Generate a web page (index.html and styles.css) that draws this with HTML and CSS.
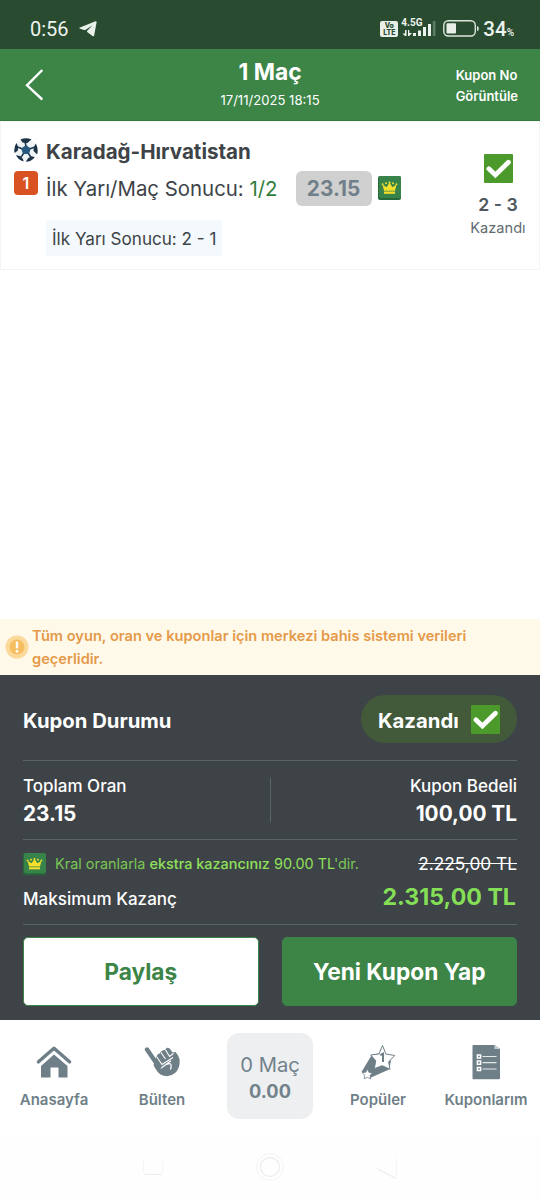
FILE: index.html
```html
<!DOCTYPE html>
<html lang="tr">
<head>
<meta charset="utf-8">
<title>Kupon</title>
<link rel="stylesheet" href="styles.css">
</head>
<body>
<svg width="0" height="0" class="defs">
  <symbol id="check" viewBox="0 0 28 28">
    <rect width="28" height="28" rx="1" fill="#4b9a2b"/>
    <path d="M4.700 14.300 11 20.300 23.600 8" fill="none" stroke="#fff" stroke-width="4.600" stroke-linecap="round"/>
  </symbol>
  <symbol id="crown" viewBox="0 0 24 24">
    <rect width="24" height="24" rx="2" fill="#25673a"/>
    <rect width="23" height="22" x="1" rx="2" fill="#37834a"/>
    <path d="M6.300 14.700 4.700 8.500 9 11.200 12 6.600l3 4.600 4.300-2.700-1.600 6.200z" fill="#f5df2d"/>
    <path d="M6.300 15.500h11.400v2.300H6.300z" fill="#f5df2d"/>
    <circle cx="4.800" cy="8.200" r="1" fill="#f5df2d"/><circle cx="8.400" cy="7.300" r="1" fill="#f5df2d"/><circle cx="12" cy="6.500" r="1.100" fill="#f5df2d"/><circle cx="15.600" cy="7.300" r="1" fill="#f5df2d"/><circle cx="19.200" cy="8.200" r="1" fill="#f5df2d"/>
  </symbol>
</svg>

<div class="status">
  <span class="clock">0:56</span>
  <svg class="plane" width="18" height="16" viewBox="0 0 18 16"><path d="M.5 7.500Q0 6.800 1 6.500L16.500.2Q17.800-.1 17.600 1.200L15.200 14.200Q14.900 15.700 13.500 14.900L8.500 11.300Q7.500 10.400 8.500 9.400L13.600 4.200 6.300 8.900Q5.700 9.200 5 9z" fill="#e9f1ea"/></svg>
  <div class="status-right">
    <div class="volte"><span>Vo</span><span>LTE</span></div>
    <div class="signal">
      <span>4.5G</span>
      <svg width="35" height="17" viewBox="0 0 35 17"><g fill="#edf3ee"><path d="M4 10h1.500v6H4L1.500 13.500H4zM7 10h1.300v3H11L8.300 16H7z"/><rect x="12" y="13" width="3" height="3"/><rect x="17" y="10.500" width="3" height="5.500"/><rect x="22" y="7" width="3" height="9"/><rect x="27" y="4" width="3" height="12"/></g><rect x="31.800" y="1" width="2.700" height="15" fill="#5b7b62"/></svg>
    </div>
    <svg class="battery" width="37" height="17" viewBox="0 0 37 17"><rect x=".8" y=".8" width="31.500" height="15.200" rx="4.500" fill="none" stroke="#dce6dd" stroke-width="1.400"/><rect x="3.500" y="3.300" width="9.500" height="10.300" rx="1" fill="#e8efe9"/><path d="M34 6q1.800 0 1.800 2.500T34 11z" fill="#dce6dd"/></svg>
    <span class="pct">34<small>%</small></span>
  </div>
</div>

<header class="topbar">
  <svg class="back" width="20" height="34" viewBox="0 0 20 34"><path d="M17.300 2 2 17.300 17.300 31.500" fill="none" stroke="#fff" stroke-width="2.400"/></svg>
  <div class="titles"><h1>1 Maç</h1><time>17/11/2025 18:15</time></div>
  <a class="couponno">Kupon No<br>Görüntüle</a>
</header>

<section class="match">
  <div class="marks">
    <svg width="24" height="24" viewBox="0 0 24 24"><circle cx="12" cy="12" r="11" fill="#eef3f6"/><path d="M12 7 16.800 10.500 15 16H9L7.200 10.500z" fill="#285980"/><path d="M6.500 1.600Q12-1 17.500 1.600L13 5.200 8.500 4.500zM21.800 5.500Q24.800 11 23 16.500L19.500 12.700 19.800 9.300zM20.800 19.300Q17 23.800 11.800 23.800L14.300 20 17.800 18.300zM9.700 23.500Q4.300 22 2 17.300L6.200 18.100 8.800 20.800zM.5 15Q-.5 9 2.500 5L4.300 9.300 3.700 12.700z" fill="#1c3247"/><path d="M12 8 11 4M16 10.700l4.500-1.500M14.500 15.500l2.500 4M9.500 15.500 7 19.300M8 10.700 3.500 9" stroke="#1c3850" stroke-width="1.500"/></svg>
    <span class="mbs">1</span>
  </div>
  <div class="info">
    <h2>Karadağ-Hırvatistan</h2>
    <div class="pick"><span class="market">İlk Yarı/Maç Sonucu: <em>1/2</em></span><span class="odd">23.15</span><svg width="23" height="24" viewBox="0 0 24 24" preserveAspectRatio="none"><use href="#crown"/></svg></div>
    <span class="half">İlk Yarı Sonucu: 2 - 1</span>
  </div>
  <div class="result"><svg width="29" height="29"><use href="#check"/></svg><b>2 - 3</b><span>Kazandı</span></div>
</section>

<main class="space"></main>

<aside class="notice">
  <svg width="24" height="24" viewBox="0 0 24 24"><circle cx="12" cy="12" r="11.500" fill="#fad99b"/><circle cx="12" cy="12" r="7.500" fill="#f7bd61"/><path d="M12 6.500v7" stroke="#fff" stroke-width="2.400"/><circle cx="12" cy="16.300" r="1.400" fill="#fff"/></svg>
  <p>Tüm oyun, oran ve kuponlar için merkezi bahis sistemi verileri geçerlidir.</p>
</aside>

<section class="summary">
  <div class="state"><h3>Kupon Durumu</h3><span class="pill"><span>Kazandı</span><svg width="29" height="29"><use href="#check"/></svg></span></div>
  <div class="totals">
    <div><span>Toplam Oran</span><b>23.15</b></div>
    <i></i>
    <div class="right"><span>Kupon Bedeli</span><b>100,00 TL</b></div>
  </div>
  <div class="gain">
    <div class="king"><svg width="23" height="22" viewBox="0 0 24 24" preserveAspectRatio="none"><use href="#crown"/></svg><p>Kral oranlarla <strong>ekstra kazancınız</strong> <span>90.00 TL</span>'dir.</p><s>2.225,00 TL</s></div>
    <div class="max"><span>Maksimum Kazanç</span><b>2.315,00 TL</b></div>
  </div>
  <div class="actions"><button class="share">Paylaş</button><button class="new">Yeni Kupon Yap</button></div>
</section>

<nav class="tabs">
  <a><svg width="36" height="36" viewBox="0 0 36 36"><path d="M18 10.500 31.500 22V33.500H22.500V23.500H14.500V33.500H5V22z" fill="#6f7f88"/><path d="M2.500 17.800 18 4.300 33.500 17.800" fill="none" stroke="#6f7f88" stroke-width="3.500" stroke-linecap="round" stroke-linejoin="round"/></svg><span>Anasayfa</span></a>
  <a><svg width="36" height="36" viewBox="0 0 36 36"><g fill="#6f7f88"><path d="M12.500 12.500Q13.500 9.500 16 9.300L17 7.500Q19 5.500 21 6L22.500 4Q25 3 26.500 5.500L28.500 8.500 31.500 8Q34.500 11 35.500 15 36.500 24 31 29 24.500 34.500 16.500 30.500 12.500 27.500 9.500 21z"/></g><path d="M12.500 12.500 18 20.500 29 13.500M17 8.500 21.500 15M21.500 5.700 25.500 12.500 29.500 9.500" fill="none" stroke="#fff" stroke-width="1.100"/><path d="M16.500 24.500 27 16.800M22.500 20.500Q29 17.500 26.500 25.500" fill="none" stroke="#fff" stroke-width="1.200"/><path d="M3 5.500 15 23" stroke="#6f7f88" stroke-width="4.400" stroke-linecap="round"/></svg><span>Bülten</span></a>
  <div class="cart"><span>0 Maç</span><b>0.00</b></div>
  <a><svg width="36" height="36" viewBox="0 0 36 36"><path d="M12 10.500 1.500 28 10 34 29 25.500 31 17 22 9z" fill="#6f7f88"/><path d="M22.500 1.500 25.900 10 34.700 11.500 28.700 17.800 30 25.300 22.200 21.700 14.300 24.700 15.700 16.700 10.700 11 19 9.900z" fill="#fff" stroke="#6f7f88" stroke-width="1"/><path d="M20.300 11.200 23 9.700V18" fill="none" stroke="#6f7f88" stroke-width="2"/><path d="M7.600 25 8.900 28.300 12.400 29.200 10 31.400 10.600 34.900 7.300 33.400 4.200 34.700 4.600 31.200 2.300 28.600 5.800 28.200z" fill="#fff" stroke="#6f7f88" stroke-width=".8"/></svg><span>Popüler</span></a>
  <a><svg width="36" height="36" viewBox="0 0 36 36"><path d="M5.500 1H26.500L32 5V34.200Q32 35.200 31 35.200H5.500Q4.500 35.200 4.500 34.200V2Q4.500 1 5.500 1z" fill="#6f7f88"/><path d="M26.500 1 32 5H26.500z" fill="#c8cfd2"/><path d="M14.500 12.500h14M14.500 18.700h14M14.500 25h14" stroke="#e4e8e9" stroke-width="1.200"/><path d="M9.400 10.900h3.200v3.200H9.400zM9.400 17.100h3.200v3.200H9.400zM9.400 23.400h3.200v3.200H9.400z" fill="none" stroke="#fff" stroke-width="1.500"/></svg><span>Kuponlarım</span></a>
</nav>

<footer class="system">
  <svg width="26" height="28" viewBox="0 0 26 28"><path d="M3.500 7V18.500Q3.500 21.500 6.500 21.500H20Q23 21.500 23 18.500V7" fill="none" stroke="#f5f5f5"/><path d="M5 21.500H21.500" stroke="#ededed" stroke-width="1.300"/></svg>
  <svg width="28" height="28" viewBox="0 0 28 28" fill="none" stroke="#eee"><circle cx="14" cy="14" r="13.300" stroke="#f3f3f3"/><circle cx="14" cy="14" r="9.500" stroke-width="1.300"/></svg>
  <svg width="26" height="28" viewBox="0 0 26 28"><path d="M22.500 25V4" stroke="#f7f7f7"/><path d="M3 15.500 22 25.500" fill="none" stroke="#ededed" stroke-width="1.400"/></svg>
</footer>
</body>
</html>
```
FILE: styles.css
```css
* { box-sizing: border-box; margin: 0; }
body { width: 540px; height: 1200px; display: flex; flex-direction: column; overflow: hidden; background: #fff; color: #3d4347; font-family: Inter, "Liberation Sans", sans-serif; }
svg { display: block; flex: none; }
.defs { position: absolute; }
h1, h2, h3, p, b, span { white-space: nowrap; }

.status { height: 49px; flex: none; padding: 8px 26px 0 30px; display: flex; align-items: center; background: #294b30; color: #edf3ee; font-family: Roboto, sans-serif; }
.clock { font-size: 20px; }
.plane { margin-left: 10px; }
.status-right { margin-left: auto; display: flex; align-items: center; }
.volte { width: 18px; height: 16px; border-radius: 2px; background: #e8efe9; color: #294b30; font: 800 7px/7px Inter, sans-serif; display: flex; flex-direction: column; align-items: center; justify-content: center; }
.signal { width: 35px; margin-left: 3px; display: grid; }
.signal > * { grid-area: 1 / 1; }
.signal span { font-size: 10px; line-height: 9px; font-weight: 700; margin-top: -2px; }
.battery { margin-left: 7px; }
.pct { font-size: 20.500px; font-weight: 500; margin-left: 3px; }
.pct small { font-size: 10px; }

.topbar { height: 72px; flex: none; padding: 0 22px 0 25px; display: grid; grid-template-columns: 1fr auto 1fr; align-items: center; background: #3c8547; color: #fff; border-bottom: 1px solid #347a3f; }
.titles { text-align: center; margin-left: -3px; }
.titles h1 { font-size: 22.800px; line-height: 26px; font-weight: 700; margin-top: -2px; }
.titles time { display: block; font-size: 13.100px; line-height: 16px; margin-top: 7px; }
.couponno { justify-self: end; font-size: 13px; line-height: 21px; font-weight: 600; padding-top: 2px; }

.match { height: 149px; flex: none; border: 1px solid #f3f4f5; display: flex; padding: 16px 13px 0 13px; }
.marks { width: 24px; display: flex; flex-direction: column; gap: 9px; }
.mbs { width: 24px; height: 24px; border-radius: 4px; background: #d85321; color: #fff; text-align: center; font-size: 16px; line-height: 24px; font-weight: 600; }
.info { margin-left: 8px; }
.info h2 { font-size: 20.550px; line-height: 27px; font-weight: 700; }
.pick { display: flex; align-items: center; margin-top: 6px; }
.market { font-size: 20.400px; }
.market em { font-style: normal; color: #2f7d3b; }
.odd { margin: 0 6px 0 18px; width: 76px; height: 35px; border-radius: 6px; background: #d0d0d0; color: #70808a; text-align: center; font-size: 20.800px; line-height: 35px; font-weight: 700; }
.pick svg { margin-top: -1px; }
.half { display: inline-block; margin-top: 14px; height: 36px; padding: 0 6px; background: #f4f9fd; border-radius: 3px; font-size: 17.100px; line-height: 37px; }
.result { margin: 16px 0 0 auto; display: flex; flex-direction: column; align-items: center; width: 56px; }
.result b { margin-top: 11px; font-size: 17.700px; line-height: 22px; font-weight: 600; color: #50585f; }
.result span { font-size: 14.600px; line-height: 20px; margin-top: 2px; color: #626b71; }

.space { flex: 1; }
.notice { height: 56px; flex: none; display: flex; align-items: center; gap: 3px; padding-left: 5px; background: #fff9ea; color: #e49a48; font-size: 14.640px; line-height: 23px; font-weight: 600; }
.notice p { width: 450px; white-space: normal; padding-top: 2px; }

.summary { height: 345px; flex: none; padding: 0 23px; background: #3d4347; color: #fff; }
.state { height: 86px; display: flex; align-items: center; justify-content: space-between; border-bottom: 1px solid #5b6568; padding-top: 3px; }
.state h3, .pill { font-size: 20.300px; font-weight: 700; }
.state h3 { padding-top: 2px; }
.pill { width: 156px; height: 48px; border-radius: 24px; background: #425a3a; display: flex; align-items: center; justify-content: space-between; padding: 0 17px; }
.pill span { padding-top: 2px; }
.totals { height: 79px; display: flex; justify-content: space-between; align-items: center; border-bottom: 1px solid #5b6568; }
.totals div { width: 200px; }
.totals span, .totals b { display: block; }
.totals span { font-size: 17px; line-height: 24px; font-weight: 500; margin-top: -1px; }
.totals b { font-size: 20.800px; line-height: 24px; font-weight: 700; margin-top: 4px; }
.totals .right { text-align: right; }
.totals i { width: 1px; height: 44px; background: #5b6568; }
.gain { height: 85px; padding-top: 12px; border-bottom: 1px solid #5b6568; }
.king { display: flex; align-items: center; height: 24px; color: #7ac655; }
.king p { margin: -2px 0 0 9px; font-size: 14.450px; }
.king strong { font-weight: 500; color: #8fe05a; }
.king p span { color: #8fe05a; }
.king s { margin: -2px 0 0 auto; font-size: 17.300px; color: #fff; }
.max { display: flex; justify-content: space-between; align-items: center; height: 40px; }
.max span { font-size: 17.050px; font-weight: 500; margin-top: 5px; }
.max b { font-size: 23.200px; font-weight: 700; color: #84df56; padding: 2px 1px 0 0; }
.actions { display: flex; gap: 23px; padding-top: 12px; }
.actions button { flex: 1; height: 69px; border: 1px solid #3c8547; border-radius: 5px; font: 700 22.700px Inter, sans-serif; padding: 0; }
.share { background: #fff; color: #3c8547; }
.new { background: #3c8547; color: #fff; }

.tabs { height: 113px; flex: none; display: grid; grid-template-columns: repeat(5, 108px); }
.tabs a { display: flex; flex-direction: column; align-items: center; padding-top: 24px; color: #6f7f88; font-size: 15px; line-height: 20px; font-weight: 600; }
.tabs a span { margin-top: 10px; }
.cart { justify-self: center; width: 86px; height: 86px; margin-top: 13px; border-radius: 12px; background: #edeff1; color: #72828b; text-align: center; display: flex; flex-direction: column; padding-top: 18px; }
.cart span { font-size: 20.200px; line-height: 27px; }
.cart b { font-size: 18.200px; line-height: 27px; font-weight: 700; }
.system { height: 67px; flex: none; padding: 20px 140px 0 140px; display: flex; justify-content: space-between; background: #fefefe; }
```
